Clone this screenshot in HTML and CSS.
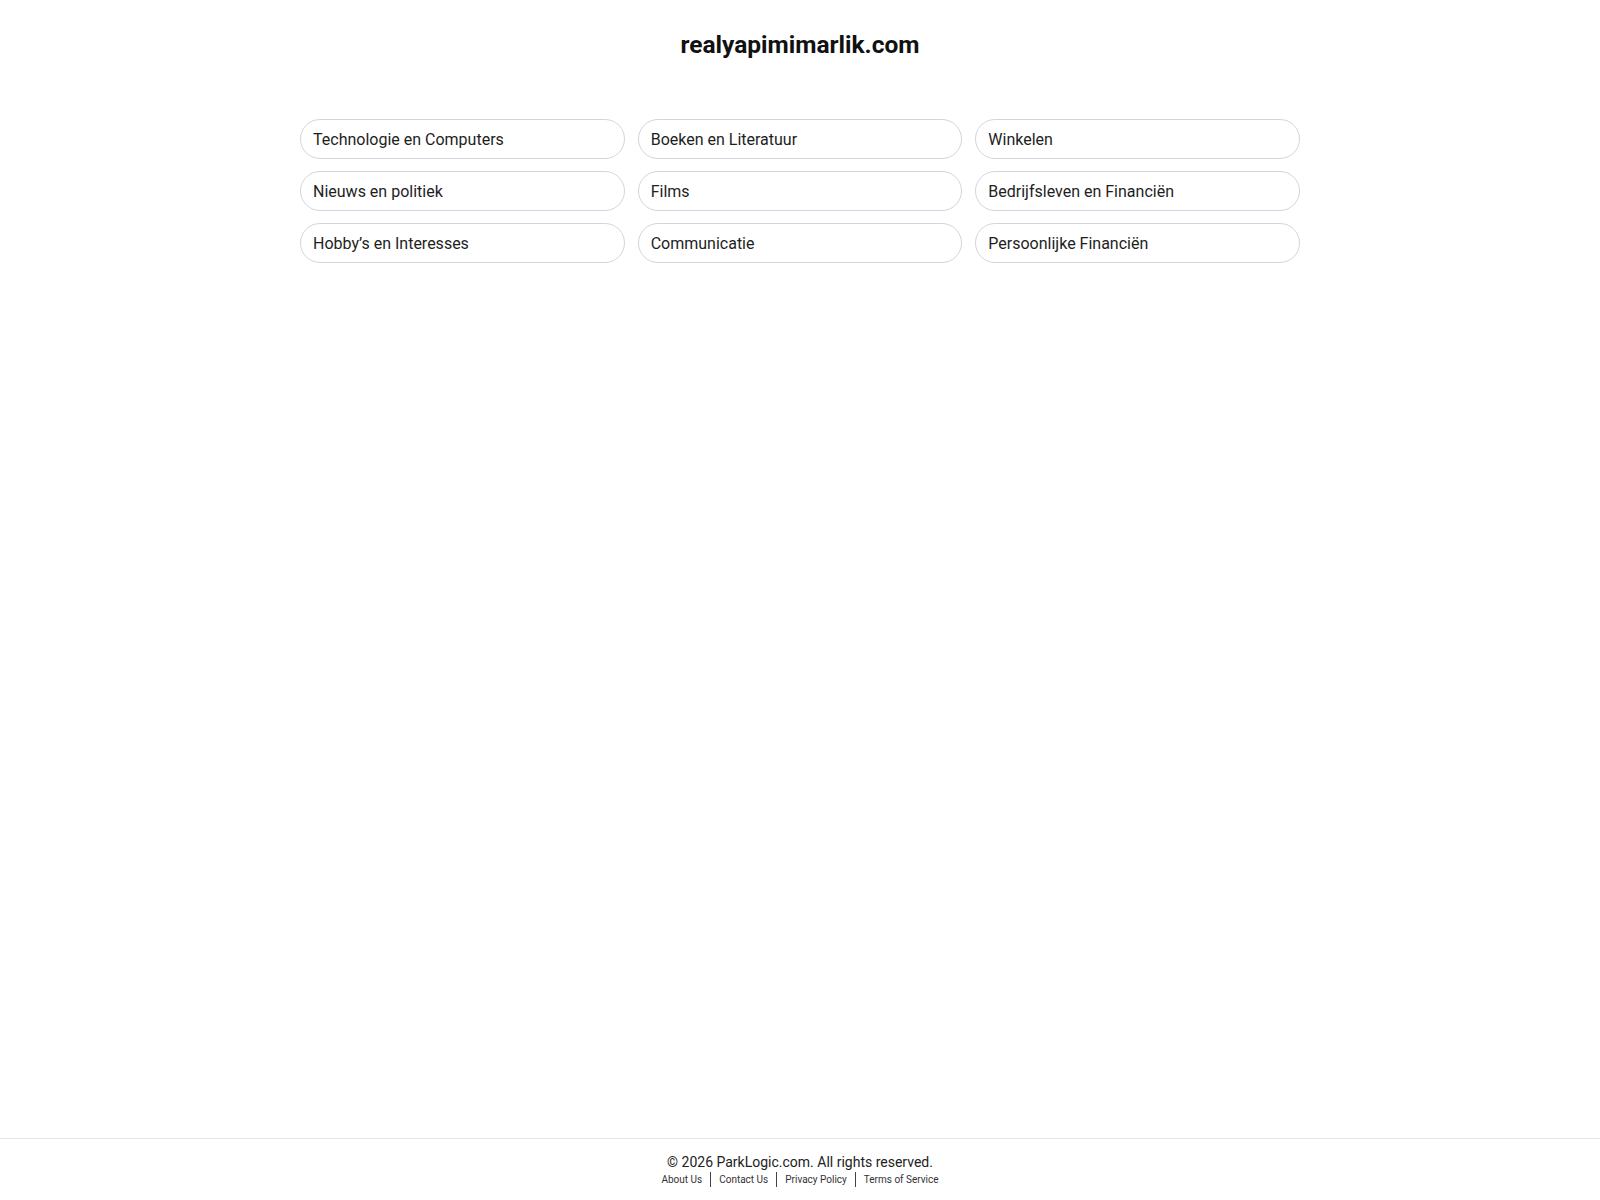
FILE: index.html
```html
<!DOCTYPE html>
<html lang="nl">
<head>
<meta charset="utf-8">
<title>realyapimimarlik.com</title>
<link rel="stylesheet" href="styles.css">
</head>
<body>
<div class="page">
  <header class="header">
    <h1 class="title">realyapimimarlik.com</h1>
  </header>
  <main class="main">
    <div class="grid">
      <a class="pill" href="#">Technologie en Computers</a>
      <a class="pill" href="#">Boeken en Literatuur</a>
      <a class="pill" href="#">Winkelen</a>
      <a class="pill" href="#">Nieuws en politiek</a>
      <a class="pill" href="#">Films</a>
      <a class="pill" href="#">Bedrijfsleven en Financiën</a>
      <a class="pill" href="#">Hobby’s en Interesses</a>
      <a class="pill" href="#">Communicatie</a>
      <a class="pill" href="#">Persoonlijke Financiën</a>
    </div>
  </main>
  <footer class="footer">
    <p class="copy">© 2026 ParkLogic.com. All rights reserved.</p>
    <nav class="links">
      <a href="#">About Us</a>
      <a href="#">Contact Us</a>
      <a href="#">Privacy Policy</a>
      <a href="#">Terms of Service</a>
    </nav>
  </footer>
</div>
</body>
</html>
```
FILE: styles.css
```css
* { box-sizing: border-box; }
html, body { margin: 0; padding: 0; background: #fff; }
body {
  font-family: Roboto, "Noto Sans", Arial, sans-serif;
  color: #1a1a1a;
}
.page {
  min-height: 100vh;
  display: flex;
  flex-direction: column;
}
.header {
  display: flex;
  justify-content: center;
  padding-top: 30px;
}
.title {
  margin: 0;
  font-size: 24.5px;
  line-height: 30px;
  font-weight: 700;
  color: #111;
}
.main {
  display: flex;
  justify-content: center;
  padding-top: 59px;
}
.grid {
  width: 1000px;
  display: grid;
  grid-template-columns: repeat(3, 1fr);
  column-gap: 13px;
  row-gap: 12px;
}
.pill {
  display: flex;
  align-items: center;
  height: 40px;
  padding: 0 12px;
  border: 1px solid #d4d4dc;
  border-radius: 20px;
  font-size: 16px;
  color: #1e1e1e;
  text-decoration: none;
}
.footer {
  margin-top: auto;
  border-top: 1px solid #e4e4e4;
  padding: 14px 0 13px;
  display: flex;
  flex-direction: column;
  align-items: center;
}
.copy {
  margin: 0;
  font-size: 14px;
  line-height: 18px;
  color: #222;
}
.links {
  display: flex;
  align-items: center;
  margin-top: 1px;
}
.links a {
  font-size: 10px;
  line-height: 15px;
  color: #333;
  text-decoration: none;
  padding: 0 8px;
  border-left: 1px solid #444;
}
.links a:first-child { border-left: none; }
```
